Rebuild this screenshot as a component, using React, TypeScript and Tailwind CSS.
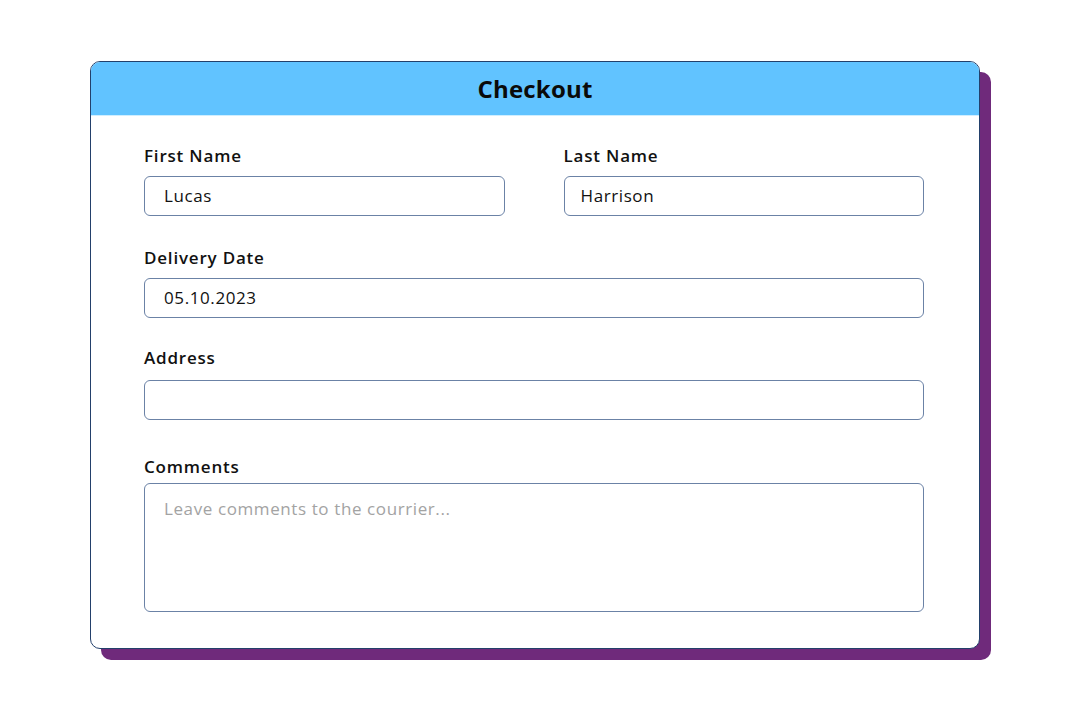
import React from "react";

const font = { fontFamily: '"Open Sans", "Noto Sans", sans-serif' };

function Label({ children, className = "" }: { children: React.ReactNode; className?: string }) {
  return (
    <div className={`h-[20px] text-[17px] leading-[20px] font-semibold tracking-[0.8px] text-[#111111] ${className}`}>{children}</div>
  );
}

function Field({ value, className = "" }: { value?: string; className?: string }) {
  return (
    <div
      className={`h-[40px] rounded-[6px] border border-[#6b82a6] bg-white flex items-center text-[17px] tracking-[0.6px] text-[#111111] ${className}`}
    >
      {value}
    </div>
  );
}

export default function App() {
  return (
    <div className="w-[1080px] h-[720px] bg-white pt-[61px] pl-[90px]" style={font}>
      <div className="w-[890px] h-[588px] rounded-[10px] border border-[#23406b] bg-white shadow-[11px_11px_0_#6f2a7b] overflow-hidden flex flex-col">
        <div className="h-[54px] bg-[#61c3ff] border-b border-[#cfeeff] flex items-center justify-center">
          <span className="text-[24px] font-bold text-[#0a0a0a] tracking-[0.2px]">Checkout</span>
        </div>
        <div className="pl-[53px] pr-[55px] pt-[30px] flex flex-col">
          <div className="flex gap-[59px]">
            <div className="flex-1 flex flex-col">
              <Label>First Name</Label>
              <Field value="Lucas" className="mt-[10px] pl-[19px]" />
            </div>
            <div className="flex-1 flex flex-col">
              <Label>Last Name</Label>
              <Field value="Harrison" className="mt-[10px] pl-[16px]" />
            </div>
          </div>
          <Label className="mt-[32px]">Delivery Date</Label>
          <Field value="05.10.2023" className="mt-[10px] pl-[19px]" />
          <Label className="mt-[30px]">Address</Label>
          <Field className="mt-[12px] pl-[19px]" />
          <Label className="mt-[37px]">Comments</Label>
          <div className="mt-[6px] h-[129px] rounded-[6px] border border-[#6b82a6] pl-[19px] pt-[12px] text-[17px] tracking-[0.6px] text-[#a3a3a3]">
            Leave comments to the courrier...
          </div>
        </div>
      </div>
    </div>
  );
}
